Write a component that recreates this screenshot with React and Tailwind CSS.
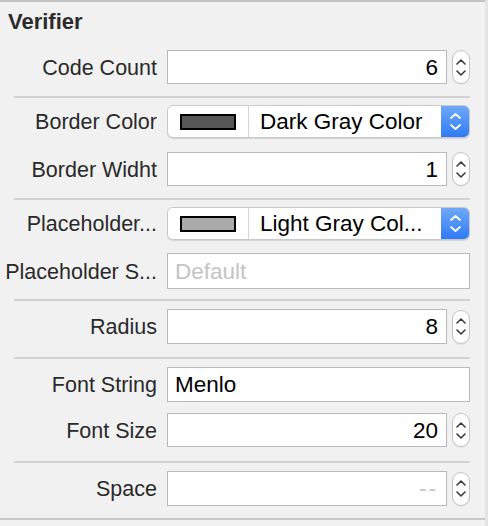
import React from 'react'

const font = { fontFamily: '"Liberation Sans", Arial, sans-serif' }

function Stepper() {
  return (
    <div className="w-[18px] h-[34px] ml-[5px] shrink-0 rounded-full border border-[#c4c4c4] bg-white flex flex-col items-center justify-center gap-[5px] shadow-[0_1px_0_rgba(0,0,0,0.06)]">
      <svg width="10" height="6" viewBox="0 0 10 6">
        <path d="M1 5 L5 1 L9 5" fill="none" stroke="#3a3a3a" strokeWidth="1.6" strokeLinecap="round" strokeLinejoin="round" />
      </svg>
      <svg width="10" height="6" viewBox="0 0 10 6">
        <path d="M1 1 L5 5 L9 1" fill="none" stroke="#3a3a3a" strokeWidth="1.6" strokeLinecap="round" strokeLinejoin="round" />
      </svg>
    </div>
  )
}

function Label({ children }) {
  return (
    <div className="w-[157px] shrink-0 pt-[3px] text-right text-[21.5px] text-[#2a2a2a] whitespace-nowrap leading-none">
      {children}
    </div>
  )
}

function NumberRow({ label, value, muted, tall, className = '' }) {
  return (
    <div className={`flex items-center ${className}`}>
      <Label>{label}</Label>
      <div className={`ml-[10px] w-[280px] ${tall ? 'h-[35px]' : 'h-[34px]'} bg-white border border-[#b9b9b9] flex items-center justify-end pr-[8px] pt-[2px]`}>
        <span className={`text-[22.5px] leading-none ${muted ? 'text-[#c2c2c2] tracking-[2px]' : 'text-black'}`}>{value}</span>
      </div>
      <Stepper />
    </div>
  )
}

function TextRow({ label, value, placeholder, tall, className = '' }) {
  return (
    <div className={`flex items-center ${className}`}>
      <Label>{label}</Label>
      <div className={`ml-[10px] w-[303px] ${tall ? 'h-[36px]' : 'h-[35px]'} bg-white border border-[#b9b9b9] flex items-center pl-[7px] pt-[2px]`}>
        {value ? (
          <span className="text-[22.5px] leading-none text-black">{value}</span>
        ) : (
          <span className="text-[22.5px] leading-none text-[#c4c4c4]">{placeholder}</span>
        )}
      </div>
    </div>
  )
}

function ColorRow({ label, swatch, value, className = '' }) {
  return (
    <div className={`flex items-center ${className}`}>
      <Label>{label}</Label>
      <div className="ml-[10px] w-[303px] h-[33px] bg-white rounded-[6px] border border-[#c9c9c9] shadow-[0_1px_1px_rgba(0,0,0,0.12)] flex items-stretch overflow-hidden">
        <div className="w-[81px] shrink-0 flex items-center justify-center border-r border-[#d4d4d4]">
          <div className="w-[56px] h-[16px] border-2 border-black" style={{ backgroundColor: swatch }} />
        </div>
        <div className="flex-1 flex items-center pl-[11px] pt-[2px] text-[22.5px] leading-none text-black whitespace-nowrap">
          {value}
        </div>
        <div className="w-[28px] shrink-0 bg-gradient-to-b from-[#6ea8f8] to-[#2e7bf5] flex flex-col items-center justify-center gap-[5px]">
          <svg width="11" height="6" viewBox="0 0 11 6">
            <path d="M1 5 L5.5 1 L10 5" fill="none" stroke="#fff" strokeWidth="1.7" strokeLinecap="round" strokeLinejoin="round" />
          </svg>
          <svg width="11" height="6" viewBox="0 0 11 6">
            <path d="M1 1 L5.5 5 L10 1" fill="none" stroke="#fff" strokeWidth="1.7" strokeLinecap="round" strokeLinejoin="round" />
          </svg>
        </div>
      </div>
    </div>
  )
}

function Separator({ className = '' }) {
  return <div className={`ml-[14px] w-[456px] h-[2px] bg-[#d2d2d2] ${className}`} />
}

export default function App() {
  return (
    <div className="w-[488px] h-[526px] bg-[#f1f1f1] flex" style={font}>
      <div className="w-[485px] flex flex-col border-t-2 border-[#c3c3c3]">
        {/* Header */}
        <div className="pl-[8px] pt-[8px] h-[48px] text-[22px] font-bold text-[#2b2b2b] leading-[24px]">
          Verifier
        </div>

        <NumberRow label="Code Count" value="6" />
        <Separator className="mt-[12px]" />

        <ColorRow label="Border Color" swatch="#575757" value="Dark Gray Color" className="mt-[7px]" />
        <NumberRow label="Border Widht" value="1" className="mt-[14px]" />
        <Separator className="mt-[12px]" />

        <ColorRow label="Placeholder..." swatch="#aaaaaa" value="Light Gray Col..." className="mt-[7px]" />
        <TextRow label="Placeholder S..." placeholder="Default" tall className="mt-[13px]" />
        <Separator className="mt-[10px]" />

        <NumberRow label="Radius" value="8" tall className="mt-[8px]" />
        <Separator className="mt-[13px]" />

        <TextRow label="Font String" value="Menlo" className="mt-[8px]" />
        <NumberRow label="Font Size" value="20" className="mt-[11px]" />
        <Separator className="mt-[14px]" />

        <NumberRow label="Space" value="--" muted tall className="mt-[8px]" />
        <div className="mt-[12px] w-[485px] h-[2px] bg-[#c9c9c9]" />
      </div>
      <div className="w-[3px] h-full bg-[#e4e4e4]" />
    </div>
  )
}
